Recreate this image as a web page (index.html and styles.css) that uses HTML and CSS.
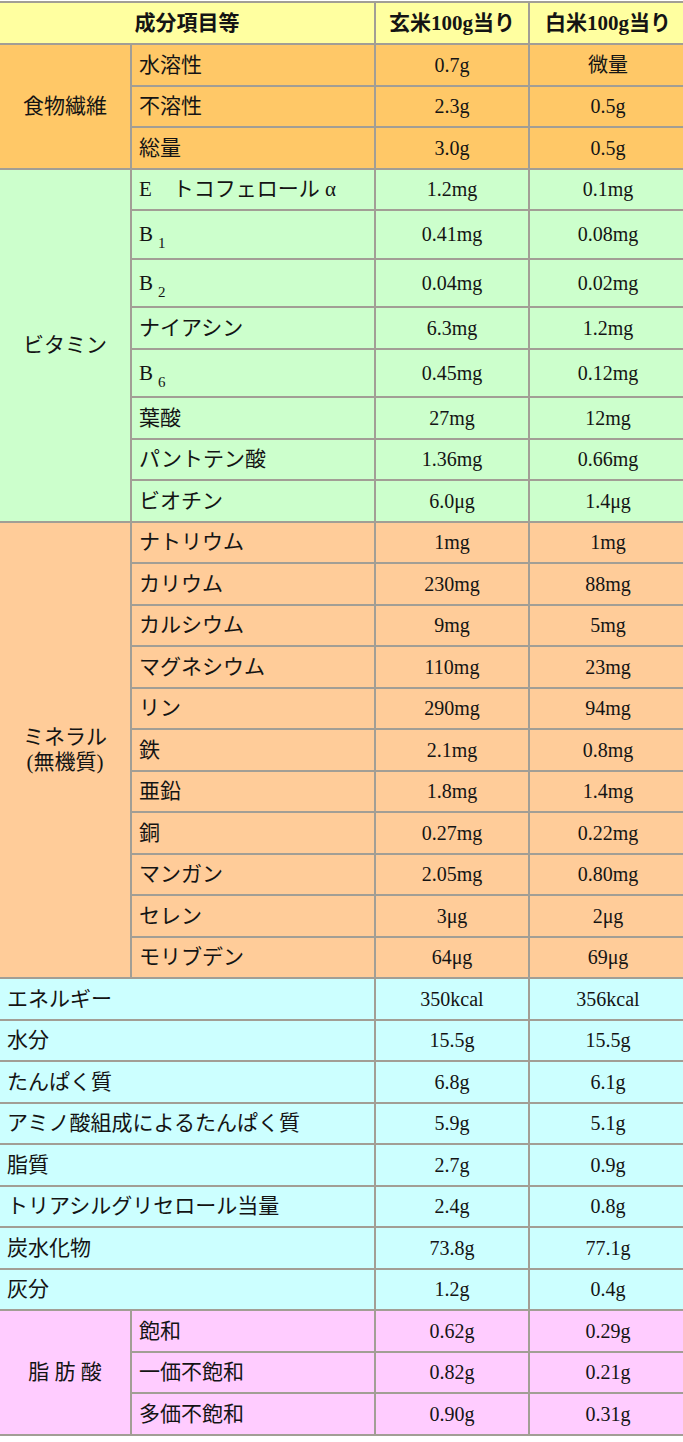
FILE: index.html
```html
<!DOCTYPE html>
<html lang="ja">
<head>
<meta charset="utf-8">
<title>玄米と白米の成分比較</title>
<link rel="stylesheet" href="styles.css">
</head>
<body>
<div class="wrap">
<table class="nutri">
<colgroup><col class="c1"><col class="c2"><col class="c3"><col class="c4"></colgroup>
<thead>
<tr class="head"><th colspan="2">成分項目等</th><th>玄米100g当り</th><th>白米100g当り</th></tr>
</thead>
<tbody class="fiber">
<tr><td class="grp" rowspan="3">食物繊維</td><td class="name">水溶性</td><td class="val">0.7g</td><td class="val">微量</td></tr>
<tr><td class="name">不溶性</td><td class="val">2.3g</td><td class="val">0.5g</td></tr>
<tr><td class="name">総量</td><td class="val">3.0g</td><td class="val">0.5g</td></tr>
</tbody>
<tbody class="vit">
<tr><td class="grp" rowspan="8">ビタミン</td><td class="name">E　トコフェロール α</td><td class="val">1.2mg</td><td class="val">0.1mg</td></tr>
<tr class="tall"><td class="name">B<sub>1</sub></td><td class="val">0.41mg</td><td class="val">0.08mg</td></tr>
<tr class="tall"><td class="name">B<sub>2</sub></td><td class="val">0.04mg</td><td class="val">0.02mg</td></tr>
<tr><td class="name">ナイアシン</td><td class="val">6.3mg</td><td class="val">1.2mg</td></tr>
<tr class="tall"><td class="name">B<sub>6</sub></td><td class="val">0.45mg</td><td class="val">0.12mg</td></tr>
<tr><td class="name">葉酸</td><td class="val">27mg</td><td class="val">12mg</td></tr>
<tr><td class="name">パントテン酸</td><td class="val">1.36mg</td><td class="val">0.66mg</td></tr>
<tr><td class="name">ビオチン</td><td class="val">6.0μg</td><td class="val">1.4μg</td></tr>
</tbody>
<tbody class="min">
<tr><td class="grp" rowspan="11">ミネラル<br>(無機質)</td><td class="name">ナトリウム</td><td class="val">1mg</td><td class="val">1mg</td></tr>
<tr><td class="name">カリウム</td><td class="val">230mg</td><td class="val">88mg</td></tr>
<tr><td class="name">カルシウム</td><td class="val">9mg</td><td class="val">5mg</td></tr>
<tr><td class="name">マグネシウム</td><td class="val">110mg</td><td class="val">23mg</td></tr>
<tr><td class="name">リン</td><td class="val">290mg</td><td class="val">94mg</td></tr>
<tr><td class="name">鉄</td><td class="val">2.1mg</td><td class="val">0.8mg</td></tr>
<tr><td class="name">亜鉛</td><td class="val">1.8mg</td><td class="val">1.4mg</td></tr>
<tr><td class="name">銅</td><td class="val">0.27mg</td><td class="val">0.22mg</td></tr>
<tr><td class="name">マンガン</td><td class="val">2.05mg</td><td class="val">0.80mg</td></tr>
<tr><td class="name">セレン</td><td class="val">3μg</td><td class="val">2μg</td></tr>
<tr><td class="name">モリブデン</td><td class="val">64μg</td><td class="val">69μg</td></tr>
</tbody>
<tbody class="gen">
<tr><td class="name" colspan="2">エネルギー</td><td class="val">350kcal</td><td class="val">356kcal</td></tr>
<tr><td class="name" colspan="2">水分</td><td class="val">15.5g</td><td class="val">15.5g</td></tr>
<tr><td class="name" colspan="2">たんぱく質</td><td class="val">6.8g</td><td class="val">6.1g</td></tr>
<tr><td class="name" colspan="2">アミノ酸組成によるたんぱく質</td><td class="val">5.9g</td><td class="val">5.1g</td></tr>
<tr><td class="name" colspan="2">脂質</td><td class="val">2.7g</td><td class="val">0.9g</td></tr>
<tr><td class="name" colspan="2">トリアシルグリセロール当量</td><td class="val">2.4g</td><td class="val">0.8g</td></tr>
<tr><td class="name" colspan="2">炭水化物</td><td class="val">73.8g</td><td class="val">77.1g</td></tr>
<tr><td class="name" colspan="2">灰分</td><td class="val">1.2g</td><td class="val">0.4g</td></tr>
</tbody>
<tbody class="fat">
<tr><td class="grp" rowspan="3">脂 肪 酸</td><td class="name">飽和</td><td class="val">0.62g</td><td class="val">0.29g</td></tr>
<tr><td class="name">一価不飽和</td><td class="val">0.82g</td><td class="val">0.21g</td></tr>
<tr><td class="name">多価不飽和</td><td class="val">0.90g</td><td class="val">0.31g</td></tr>
</tbody>
</table>
</div>
</body>
</html>
```

FILE: styles.css
```css
html, body {
  margin: 0;
  padding: 0;
  background: #ffffff;
}

.wrap {
  overflow: hidden;
  padding-top: 1px;
  width: 683px;
}

.nutri {
  border-collapse: collapse;
  table-layout: fixed;
  width: 688px;
  margin-left: -2px;
  font-family: "Liberation Serif", "Noto Sans CJK JP", serif;
  color: #141414;
}

.c1 { width: 132px; }
.c2 { width: 244px; }
.c3 { width: 154px; }
.c4 { width: 158px; }

.nutri th,
.nutri td {
  border: 2px solid #a29e95;
  height: 39.5px;
  padding: 0 0 0 7px;
  vertical-align: middle;
  font-size: 21px;
  line-height: 26px;
  font-weight: normal;
  white-space: nowrap;
  overflow: hidden;
}

.nutri .head th {
  background: #ffffa0;
  font-weight: bold;
  text-align: center;
  padding: 0;
  height: 40px;
  font-size: 21px;
}

.nutri td.grp {
  text-align: center;
  padding: 0;
  line-height: 25px;
}

.nutri td.val {
  text-align: center;
  padding: 0;
  font-size: 20px;
}

.nutri tr.tall td {
  height: 46.5px;
}

.nutri sub {
  font-size: 15px;
  vertical-align: -7px;
  line-height: 0;
  margin-left: 5px;
}

.fiber td { background: #ffc867; }
.vit td { background: #ccffcc; }
.min td { background: #ffcc99; }
.gen td { background: #ccffff; }
.fat td { background: #ffccff; }
```
